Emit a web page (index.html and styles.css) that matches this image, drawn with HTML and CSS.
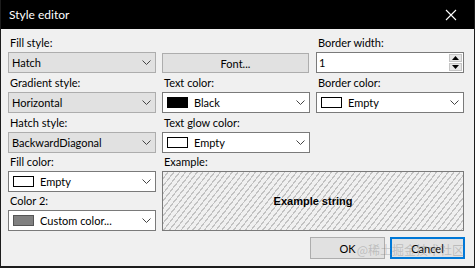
FILE: index.html
```html
<!DOCTYPE html>
<html lang="en">
<head>
    <meta charset="UTF-8" />
    <title>Style editor</title>
    <link rel="stylesheet" href="styles.css">
</head>
<body>
    <div class="window">
        <div class="titlebar">
            <span class="title">Style editor</span>
            <svg class="close" width="12" height="12" viewBox="0 0 12 12">
                <path d="M1 1 L11 11 M11 1 L1 11" stroke="#fff" stroke-width="1.1" fill="none" />
            </svg>
        </div>

        <div class="content">
            <div class="grid">
                <!-- row 1 -->
                <div class="field">
                    <label>Fill style:</label>
                    <div class="combo">
                        <span class="value">Hatch</span>
                        <svg class="chevron" width="9" height="5" viewBox="0 0 9 5"><path d="M0.5 0.5 L4.5 4.5 L8.5 0.5" stroke="#444" fill="none" /></svg>
                    </div>
                </div>
                <div class="field">
                    <button class="btn font-btn">Font...</button>
                </div>
                <div class="field">
                    <label>Border width:</label>
                    <div class="spin">
                        <span class="value">1</span>
                        <div class="spin-buttons">
                            <div class="spin-btn"><svg width="7" height="4" viewBox="0 0 7 4"><path d="M0 4 L3.5 0 L7 4 Z" fill="#000" /></svg></div>
                            <div class="spin-btn"><svg width="7" height="4" viewBox="0 0 7 4"><path d="M0 0 L3.5 4 L7 0 Z" fill="#000" /></svg></div>
                        </div>
                    </div>
                </div>

                <!-- row 2 -->
                <div class="field">
                    <label>Gradient style:</label>
                    <div class="combo">
                        <span class="value">Horizontal</span>
                        <svg class="chevron" width="9" height="5" viewBox="0 0 9 5"><path d="M0.5 0.5 L4.5 4.5 L8.5 0.5" stroke="#444" fill="none" /></svg>
                    </div>
                </div>
                <div class="field">
                    <label>Text color:</label>
                    <div class="combo color-combo">
                        <span class="swatch black"></span>
                        <span class="value">Black</span>
                        <svg class="chevron" width="9" height="5" viewBox="0 0 9 5"><path d="M0.5 0.5 L4.5 4.5 L8.5 0.5" stroke="#444" fill="none" /></svg>
                    </div>
                </div>
                <div class="field">
                    <label>Border color:</label>
                    <div class="combo color-combo">
                        <span class="swatch"></span>
                        <span class="value">Empty</span>
                        <svg class="chevron" width="9" height="5" viewBox="0 0 9 5"><path d="M0.5 0.5 L4.5 4.5 L8.5 0.5" stroke="#444" fill="none" /></svg>
                    </div>
                </div>

                <!-- row 3 -->
                <div class="field">
                    <label>Hatch style:</label>
                    <div class="combo">
                        <span class="value">BackwardDiagonal</span>
                        <svg class="chevron" width="9" height="5" viewBox="0 0 9 5"><path d="M0.5 0.5 L4.5 4.5 L8.5 0.5" stroke="#444" fill="none" /></svg>
                    </div>
                </div>
                <div class="field">
                    <label>Text glow color:</label>
                    <div class="combo color-combo">
                        <span class="swatch"></span>
                        <span class="value">Empty</span>
                        <svg class="chevron" width="9" height="5" viewBox="0 0 9 5"><path d="M0.5 0.5 L4.5 4.5 L8.5 0.5" stroke="#444" fill="none" /></svg>
                    </div>
                </div>
                <div class="field"></div>

                <!-- row 4 -->
                <div class="field">
                    <label>Fill color:</label>
                    <div class="combo color-combo">
                        <span class="swatch"></span>
                        <span class="value">Empty</span>
                        <svg class="chevron" width="9" height="5" viewBox="0 0 9 5"><path d="M0.5 0.5 L4.5 4.5 L8.5 0.5" stroke="#444" fill="none" /></svg>
                    </div>
                </div>
                <div class="field example-field">
                    <label>Example:</label>
                    <div class="example-box">Example string</div>
                </div>

                <!-- row 5 -->
                <div class="field">
                    <label>Color 2:</label>
                    <div class="combo color-combo">
                        <span class="swatch gray"></span>
                        <span class="value">Custom color...</span>
                        <svg class="chevron" width="9" height="5" viewBox="0 0 9 5"><path d="M0.5 0.5 L4.5 4.5 L8.5 0.5" stroke="#444" fill="none" /></svg>
                    </div>
                </div>
            </div>

            <div class="buttons">
                <button class="btn">OK</button>
                <button class="btn default">Cancel</button>
            </div>
        </div>

        <div class="watermark">@稀土掘金技术社区</div>
    </div>
</body>
</html>
```

FILE: styles.css
```css
body {
    margin: 0;
    background-color: #1a1a1a;
    font-family: Lato, 'Noto Sans', sans-serif;
    font-size: 11px;
    color: #000;
}

.window {
    position: relative;
    width: 475px;
    height: 268px;
    box-sizing: border-box;
    background-color: #f0f0f0;
    border: 1px solid #1c1c1c;
    border-top: none;
    border-bottom-width: 2px;
    overflow: hidden;
}

.titlebar {
    height: 29px;
    background-color: #000;
    display: flex;
    align-items: center;
    justify-content: space-between;
    padding: 0 17px 0 8px;
}

    .titlebar .title {
        color: #fff;
        font-size: 12px;
    }

.content {
    padding: 6px 0 0 7px;
}

.grid {
    display: grid;
    grid-template-columns: 148px 148px 148px;
    grid-template-rows: 40px 40px 39px 39px 40px;
    column-gap: 6px;
}

.field {
    display: flex;
    flex-direction: column;
}

    .field label {
        height: 16px;
        line-height: 16px;
        margin-bottom: 1px;
        padding-left: 2px;
        color: #000;
    }

.combo,
.spin {
    height: 21px;
    box-sizing: border-box;
    display: flex;
    align-items: center;
    background-color: #e1e1e1;
    border: 1px solid #adadad;
    padding: 0 4px 0 3px;
}

    .combo .value {
        flex: 1;
        white-space: nowrap;
    }

.color-combo {
    background-color: #fff;
    border-color: #7a7a7a;
    padding-left: 4px;
}

.swatch {
    width: 19px;
    height: 9px;
    border: 1px solid #000;
    background-color: #fff;
    margin-right: 6px;
}

    .swatch.black {
        background-color: #000;
    }

    .swatch.gray {
        background-color: #808080;
        border-color: #555;
    }

.spin {
    background-color: #fff;
    border-color: #7a7a7a;
    padding: 0 1px 0 2px;
}

    .spin .value {
        flex: 1;
    }

.spin-buttons {
    display: flex;
    flex-direction: column;
    gap: 1px;
}

.spin-btn {
    width: 13px;
    height: 8px;
    background-color: #e6e6e6;
    border: 1px solid #c4c4c4;
    box-sizing: border-box;
    display: flex;
    align-items: center;
    justify-content: center;
}

.btn {
    font-family: inherit;
    font-size: 11px;
    color: #000;
    background-color: #e1e1e1;
    border: 1px solid #adadad;
    padding: 0;
    height: 22px;
    width: 75px;
}

.font-btn {
    width: 147px;
    height: 20px;
    margin-top: 18px;
}

.example-field {
    grid-column: 2 / 4;
    grid-row: 4 / 6;
}

.example-box {
    flex: 1;
    margin-bottom: 2px;
    border: 1px solid #7a7a7a;
    background-color: #f0f0f0;
    background-image: repeating-linear-gradient(128deg, transparent 0, transparent 3.4px, #c2c2c2 3.4px, #c2c2c2 4.6px);
    display: flex;
    align-items: center;
    justify-content: center;
    font-family: 'Liberation Sans', Arial, sans-serif;
    font-weight: bold;
    font-size: 11px;
}

.buttons {
    display: flex;
    justify-content: flex-end;
    gap: 5px;
    margin-top: 4px;
    padding-right: 9px;
}

    .btn.default {
        border: 2px solid #0078d7;
    }

.watermark {
    position: absolute;
    right: 10px;
    bottom: 8px;
    font-family: 'Noto Sans CJK SC', sans-serif;
    font-size: 12px;
    color: rgba(120, 120, 120, 0.35);
    pointer-events: none;
}
```
